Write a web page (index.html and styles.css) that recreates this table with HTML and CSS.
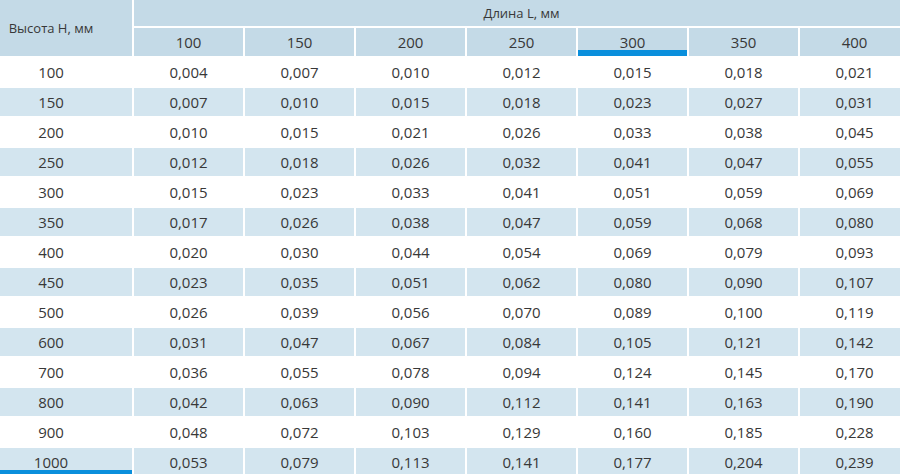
FILE: index.html
```html
<!DOCTYPE html>
<html lang="ru">
<head>
<meta charset="utf-8">
<title>Таблица</title>
<link rel="stylesheet" href="styles.css">
</head>
<body>
<div class="wrap">
<table class="grid">
  <colgroup>
    <col class="c-head">
    <col class="c-val"><col class="c-val"><col class="c-val"><col class="c-val"><col class="c-val"><col class="c-val"><col class="c-val">
  </colgroup>
  <thead>
    <tr>
      <th class="corner" rowspan="2">Высота Н, мм</th>
      <th class="group" colspan="7">Длина L, мм</th>
    </tr>
    <tr class="lens">
      <th>100</th><th>150</th><th>200</th><th>250</th><th class="active">300</th><th>350</th><th>400</th>
    </tr>
  </thead>
  <tbody>
    <tr><th>100</th><td>0,004</td><td>0,007</td><td>0,010</td><td>0,012</td><td>0,015</td><td>0,018</td><td>0,021</td></tr>
    <tr><th>150</th><td>0,007</td><td>0,010</td><td>0,015</td><td>0,018</td><td>0,023</td><td>0,027</td><td>0,031</td></tr>
    <tr><th>200</th><td>0,010</td><td>0,015</td><td>0,021</td><td>0,026</td><td>0,033</td><td>0,038</td><td>0,045</td></tr>
    <tr><th>250</th><td>0,012</td><td>0,018</td><td>0,026</td><td>0,032</td><td>0,041</td><td>0,047</td><td>0,055</td></tr>
    <tr><th>300</th><td>0,015</td><td>0,023</td><td>0,033</td><td>0,041</td><td>0,051</td><td>0,059</td><td>0,069</td></tr>
    <tr><th>350</th><td>0,017</td><td>0,026</td><td>0,038</td><td>0,047</td><td>0,059</td><td>0,068</td><td>0,080</td></tr>
    <tr><th>400</th><td>0,020</td><td>0,030</td><td>0,044</td><td>0,054</td><td>0,069</td><td>0,079</td><td>0,093</td></tr>
    <tr><th>450</th><td>0,023</td><td>0,035</td><td>0,051</td><td>0,062</td><td>0,080</td><td>0,090</td><td>0,107</td></tr>
    <tr><th>500</th><td>0,026</td><td>0,039</td><td>0,056</td><td>0,070</td><td>0,089</td><td>0,100</td><td>0,119</td></tr>
    <tr><th>600</th><td>0,031</td><td>0,047</td><td>0,067</td><td>0,084</td><td>0,105</td><td>0,121</td><td>0,142</td></tr>
    <tr><th>700</th><td>0,036</td><td>0,055</td><td>0,078</td><td>0,094</td><td>0,124</td><td>0,145</td><td>0,170</td></tr>
    <tr><th>800</th><td>0,042</td><td>0,063</td><td>0,090</td><td>0,112</td><td>0,141</td><td>0,163</td><td>0,190</td></tr>
    <tr><th>900</th><td>0,048</td><td>0,072</td><td>0,103</td><td>0,129</td><td>0,160</td><td>0,185</td><td>0,228</td></tr>
    <tr><th class="active">1000</th><td>0,053</td><td>0,079</td><td>0,113</td><td>0,141</td><td>0,177</td><td>0,204</td><td>0,239</td></tr>
  </tbody>
</table>
</div>
</body>
</html>
```

FILE: styles.css
```css
html, body {
  margin: 0;
  padding: 0;
  background: #ffffff;
  overflow: hidden;
}

.wrap {
  width: 900px;
  height: 474px;
  overflow: hidden;
}

.grid {
  border-collapse: separate;
  border-spacing: 2px;
  margin: -2px 0 0 -32px;
  table-layout: fixed;
  width: 943px;
  font-family: "Open Sans", "DejaVu Sans", sans-serif;
  font-size: 15px;
  color: #383838;
}

.c-head { width: 162px; }
.c-val { width: 109px; }

.grid th,
.grid td {
  padding: 0;
  text-align: center;
  font-weight: normal;
  height: 28px;
  line-height: 28px;
  box-sizing: border-box;
}

.grid thead th {
  background: #c4dae7;
}

.grid .corner {
  font-size: 13px;
  line-height: 18px;
}

.grid .group {
  height: 26px;
  line-height: 26px;
  font-size: 13px;
}

.grid tbody tr:nth-child(even) th,
.grid tbody tr:nth-child(even) td {
  background: #d3e5ef;
}

.grid .active {
  box-shadow: inset 0 -6px 0 #0a8fdc;
}
```
